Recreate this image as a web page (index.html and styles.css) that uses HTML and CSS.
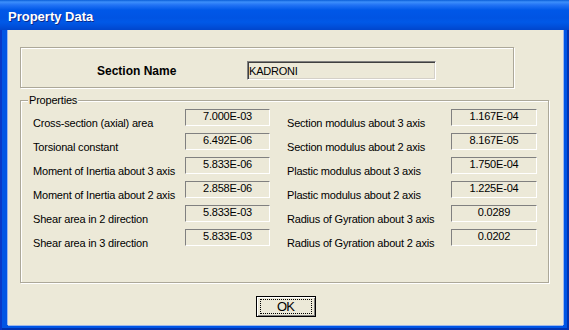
FILE: index.html
```html
<!DOCTYPE html>
<html lang="en">

<head>
    <meta charset="UTF-8">
    <meta name="viewport" content="width=device-width, initial-scale=1.0">
    <title>Property Data</title>
    <link rel="stylesheet" href="styles.css">
</head>

<body>
    <div class="window">
        <div class="titlebar">
            <span class="title">Property Data</span>
        </div>
        <div class="client">
            <div class="group name-group">
                <span class="name-label">Section Name</span>
                <input class="name-input" type="text" value="KADRONI" readonly>
            </div>

            <fieldset class="props">
                <legend>Properties</legend>
                <div class="props-grid">
                    <span class="prop-label">Cross-section (axial) area</span>
                    <span class="value">7.000E-03</span>
                    <span class="prop-label col2">Section modulus about 3 axis</span>
                    <span class="value">1.167E-04</span>

                    <span class="prop-label">Torsional constant</span>
                    <span class="value">6.492E-06</span>
                    <span class="prop-label col2">Section modulus about 2 axis</span>
                    <span class="value">8.167E-05</span>

                    <span class="prop-label">Moment of Inertia about 3 axis</span>
                    <span class="value">5.833E-06</span>
                    <span class="prop-label col2">Plastic modulus about 3 axis</span>
                    <span class="value">1.750E-04</span>

                    <span class="prop-label">Moment of Inertia about 2 axis</span>
                    <span class="value">2.858E-06</span>
                    <span class="prop-label col2">Plastic modulus about 2 axis</span>
                    <span class="value">1.225E-04</span>

                    <span class="prop-label">Shear area in 2 direction</span>
                    <span class="value">5.833E-03</span>
                    <span class="prop-label col2">Radius of Gyration about 3 axis</span>
                    <span class="value">0.0289</span>

                    <span class="prop-label">Shear area in 3 direction</span>
                    <span class="value">5.833E-03</span>
                    <span class="prop-label col2">Radius of Gyration about 2 axis</span>
                    <span class="value">0.0202</span>
                </div>
            </fieldset>

            <div class="actions">
                <button class="ok-button"><span class="focus-rect">OK</span></button>
            </div>
        </div>
    </div>
</body>

</html>
```

FILE: styles.css
```css
body {
    margin: 0;
    padding: 0;
    font-family: "Liberation Sans", Arial, sans-serif;
    font-size: 11px;
    background-color: #fff;
}

.window {
    width: 569px;
    height: 330px;
    display: flex;
    flex-direction: column;
    background-color: #0055e5;
    box-shadow: inset 2px 0 0 #0838c8, inset -2px 0 0 #0032b0, inset 0 -2px 0 #0032b0;
}

.titlebar {
    height: 30px;
    box-sizing: border-box;
    padding: 9px 0 0 8px;
    background: linear-gradient(to bottom, #0a5ed8 0px, #3d8ffb 2px, #2273f4 5px, #0058e8 10px, #0054e3 18px, #0059e8 22px, #0050dc 26px, #0046cc 30px);
}

.title {
    display: block;
    color: #fff;
    font-weight: bold;
    font-size: 13px;
    line-height: 16px;
    text-shadow: 1px 1px 0 #0a2a8c;
}

.client {
    flex: 1;
    margin: 0 6px 5px 8px;
    padding: 17px 0 0 12px;
    background-color: #ece9d8;
    box-shadow: -1px 0 0 #9cb6ec, 1px 0 0 #9cb6ec, 0 1px 0 #9cb6ec;
}

/* etched group boxes */
.group,
.props {
    border: 1px solid #aca899;
    box-shadow: inset 1px 1px 0 #fff, 1px 1px 0 #fff;
}

.name-group {
    width: 494px;
    height: 41px;
    box-sizing: border-box;
    display: flex;
    align-items: flex-start;
    padding: 13px 0 0 76px;
}

.name-label {
    width: 150px;
    padding-top: 3px;
    font-weight: bold;
    font-size: 12px;
    line-height: 15px;
}

.name-input {
    width: 189px;
    height: 19px;
    box-sizing: border-box;
    margin: 0;
    padding: 0 1px;
    font-family: "Liberation Sans", Arial, sans-serif;
    font-size: 11px;
    letter-spacing: -0.2px;
    color: #000;
    background-color: #ece9d8;
    border: 1px solid;
    border-color: #808080 #fff #fff #808080;
    box-shadow: inset 1px 1px 0 #404040, inset -1px -1px 0 #d4d0c8;
    outline: none;
}

.props {
    width: 529px;
    box-sizing: border-box;
    margin: 6px 0 0 0;
    padding: 2px 0 29px 12px;
}

.props legend {
    margin-left: -5px;
    padding: 0 1px;
    line-height: 13px;
    letter-spacing: -0.2px;
    background-color: #ece9d8;
}

.props-grid {
    display: grid;
    grid-template-columns: 152px 85px 181px 86px;
    grid-auto-rows: 24px;
}

.prop-label {
    padding-top: 8px;
    line-height: 13px;
    letter-spacing: -0.2px;
    white-space: nowrap;
}

.prop-label.col2 {
    padding-left: 17px;
}

.value {
    height: 17px;
    box-sizing: border-box;
    line-height: 13px;
    letter-spacing: -0.2px;
    text-align: center;
    border: 1px solid;
    border-color: #808080 #fff #fff #808080;
}

.actions {
    display: flex;
    justify-content: center;
    margin-top: 13px;
    padding-right: 12px;
}

.ok-button {
    width: 60px;
    height: 21px;
    box-sizing: border-box;
    margin: 0;
    padding: 2px 3px;
    background-color: #ece9d8;
    border: 1px solid #000;
    box-shadow: inset 1px 1px 0 #fff, inset -1px -1px 0 #808080;
    font-family: "Liberation Sans", Arial, sans-serif;
    font-size: 13px;
    letter-spacing: -1px;
    color: #000;
}

.focus-rect {
    display: block;
    height: 13px;
    line-height: 13px;
    border: 1px dotted #000;
}
```
